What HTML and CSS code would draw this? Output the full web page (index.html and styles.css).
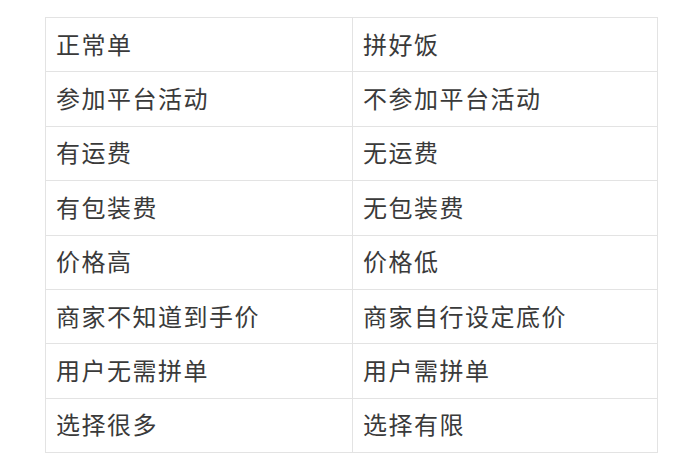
FILE: index.html
```html
<!DOCTYPE html>
<html lang="zh">
<head>
<meta charset="utf-8">
<link rel="stylesheet" href="styles.css">
</head>
<body>
<div class="cmp">
  <div class="cell">正常单</div><div class="cell">拼好饭</div>
  <div class="cell">参加平台活动</div><div class="cell">不参加平台活动</div>
  <div class="cell">有运费</div><div class="cell">无运费</div>
  <div class="cell">有包装费</div><div class="cell">无包装费</div>
  <div class="cell">价格高</div><div class="cell">价格低</div>
  <div class="cell">商家不知道到手价</div><div class="cell">商家自行设定底价</div>
  <div class="cell">用户无需拼单</div><div class="cell">用户需拼单</div>
  <div class="cell">选择很多</div><div class="cell">选择有限</div>
</div>
</body>
</html>
```

FILE: styles.css
```css
html, body {
  margin: 0;
  padding: 0;
  background: #ffffff;
}
body {
  padding: 17px 0 0 45px;
  font-family: "Noto Sans CJK SC", "Noto Sans", sans-serif;
}
.cmp {
  display: grid;
  grid-template-columns: 307px 305px;
  grid-auto-rows: 54.375px;
  width: 612px;
  border-top: 1px solid #e3e3e3;
  border-left: 1px solid #e3e3e3;
}
.cell {
  box-sizing: border-box;
  display: flex;
  align-items: center;
  padding: 0 0 2px 10px;
  border-right: 1px solid #e3e3e3;
  border-bottom: 1px solid #e3e3e3;
  font-size: 24px;
  letter-spacing: 1.5px;
  color: #3a3a3a;
  line-height: 1;
}
```
